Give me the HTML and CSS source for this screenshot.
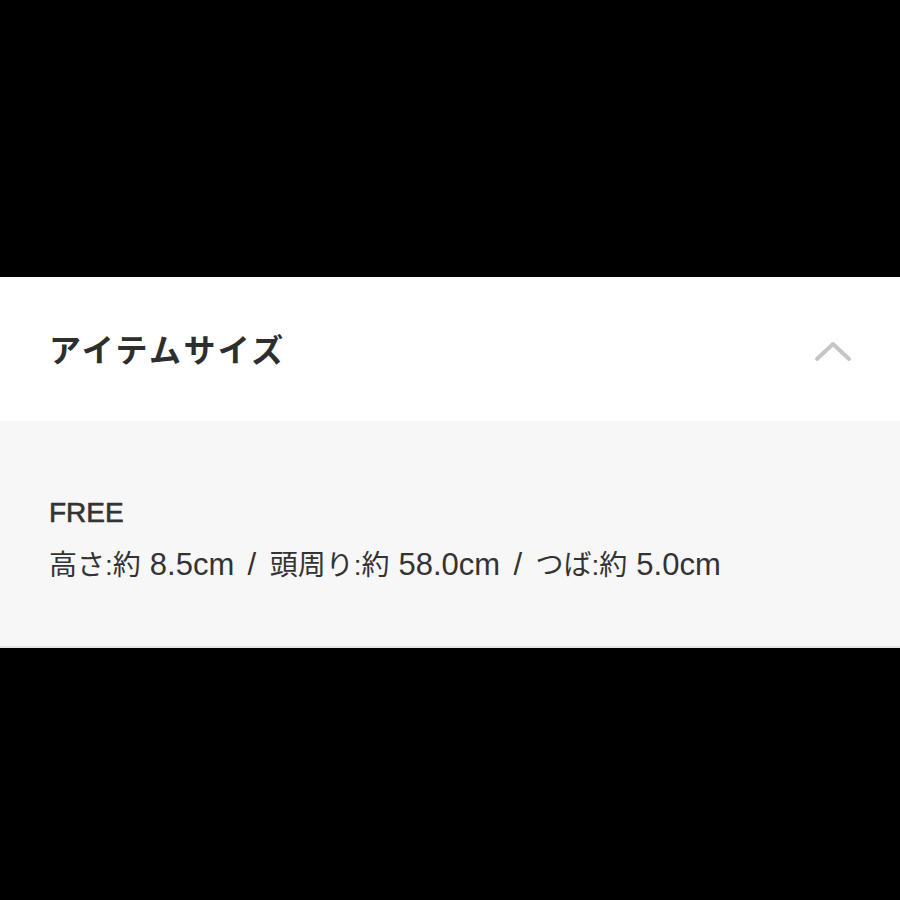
FILE: index.html
```html
<!DOCTYPE html>
<html lang="ja">
<head>
  <meta charset="UTF-8" />
  <meta name="viewport" content="width=device-width, initial-scale=1.0" />
  <title>アイテムサイズ</title>
  <link rel="stylesheet" href="styles.css">
</head>
<body>

<div class="screen">
  <section class="accordion">
    <header class="acc-head">
      <h2>アイテムサイズ</h2>
      <svg class="chevron" width="38" height="24" viewBox="0 0 38 24">
        <path d="M3 20 L19 5 L35 20" fill="none" stroke="#c6c6c6" stroke-width="4" stroke-linecap="round" stroke-linejoin="round"/>
      </svg>
    </header>
    <div class="acc-body">
      <p class="size-name">FREE</p>
      <p class="size-detail">高さ:約<span class="num">8.5cm</span><span class="sep"> / </span>頭周り:約<span class="num">58.0cm</span><span class="sep"> / </span>つば:約<span class="num">5.0cm</span></p>
    </div>
  </section>
</div>

</body>
</html>
```

FILE: styles.css
```css
body {
  margin: 0;
  background: #000;
  font-family: "Liberation Sans", "Noto Sans CJK JP", sans-serif;
  color: #333;
}

.screen {
  height: 900px;
  padding-top: 277px;
  box-sizing: border-box;
}

.accordion {
  background: #fff;
}

.acc-head {
  height: 144px;
  display: flex;
  align-items: center;
  justify-content: space-between;
  padding: 0 48px 0 49px;
}

.acc-head h2 {
  margin: 0 0 3px;
  font-family: "Noto Sans CJK JP", sans-serif;
  font-size: 32px;
  font-weight: 700;
  color: #2e2e2e;
  letter-spacing: 2.4px;
}

.chevron {
  margin-top: 3px;
}

.acc-body {
  background: #f7f7f7;
  padding: 72px 49px 60px;
  border-bottom: 2px solid #e4e4e4;
}

.acc-body p {
  margin: 0;
}

.size-name {
  font-size: 28px;
  line-height: 40px;
  -webkit-text-stroke: 0.6px #333;
}

.size-detail {
  font-size: 28px;
  line-height: 40px;
  margin-top: 12px !important;
}

.size-detail .num {
  font-size: 31px;
  margin-left: 9px;
}

.size-detail .sep {
  font-size: 31px;
  word-spacing: 4.8px;
}
```
